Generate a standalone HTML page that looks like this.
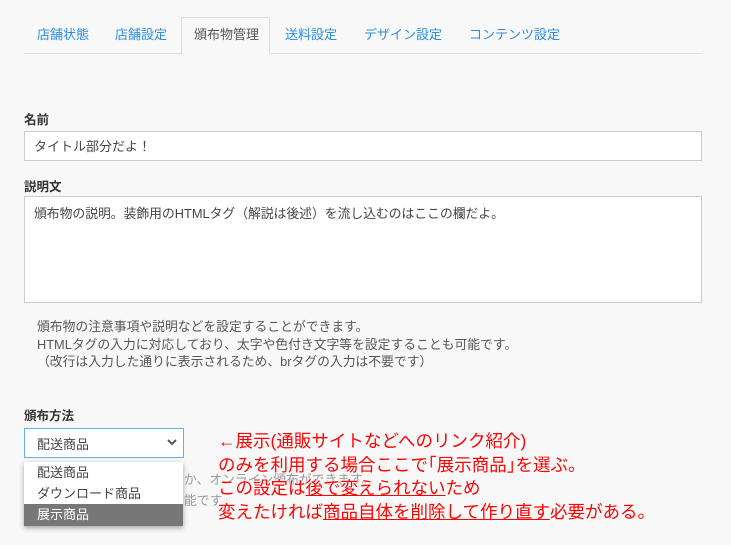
<!DOCTYPE html>
<html><head><meta charset="utf-8"><style>
body{margin:0;background:#f8f8f8;font-family:"Liberation Sans","Noto Sans CJK JP",sans-serif;color:#333;width:731px;height:545px;overflow:hidden;position:relative}
.a{position:absolute;white-space:nowrap}
.tab{position:absolute;top:17px;height:36px;line-height:36px;font-size:13px;color:#2a8ee6}
.lbl{font-size:12.5px;font-weight:bold;color:#333}
.box{position:absolute;background:#fff;border:1px solid #ccc;box-sizing:border-box}
.red{color:#f00;font-size:17.5px;text-shadow:0 0 2px #fff,0 0 2px #fff}
</style></head><body>
<div class="a" style="left:24px;top:53px;width:677px;border-top:1px solid #ddd"></div>
<div class="tab" style="left:37px">店舗状態</div>
<div class="tab" style="left:115px">店舗設定</div>
<div class="a" style="left:181px;top:17px;width:89px;height:37px;border:1px solid #ddd;border-bottom:none;background:#f8f8f8;box-sizing:border-box"></div>
<div class="tab" style="left:194px;color:#555">頒布物管理</div>
<div class="tab" style="left:285px">送料設定</div>
<div class="tab" style="left:364px">デザイン設定</div>
<div class="tab" style="left:469px">コンテンツ設定</div>

<div class="a lbl" style="left:24px;top:109px">名前</div>
<div class="box" style="left:24px;top:131px;width:678px;height:30px"></div>
<div class="a" style="left:34px;top:136px;font-size:13px;color:#444">タイトル部分だよ！</div>
<div class="a lbl" style="left:24px;top:176px">説明文</div>
<div class="box" style="left:24px;top:196px;width:678px;height:107px"></div>
<div class="a" style="left:34px;top:203px;font-size:12.8px;color:#444">頒布物の説明。装飾用のHTMLタグ（解説は後述）を流し込むのはここの欄だよ。</div>
<div class="a" style="left:37px;top:318px;font-size:12.8px;color:#555;line-height:17.5px">頒布物の注意事項や説明などを設定することができます。<br>HTMLタグの入力に対応しており、太字や色付き文字等を設定することも可能です。<br>（改行は入力した通りに表示されるため、brタグの入力は不要です）</div>

<div class="a lbl" style="left:24px;top:405px">頒布方法</div>
<div class="box" style="left:24px;top:428px;width:160px;height:30px;border-color:#66afe9"></div>
<div class="a" style="left:37px;top:434px;font-size:13px;color:#444">配送商品</div>
<svg class="a" style="left:167px;top:438px" width="10" height="8"><path d="M1 2 L5 6 L9 2" stroke="#555" stroke-width="2" fill="none"/></svg>
<div class="a" style="left:184px;top:470px;font-size:12.8px;color:#999;line-height:20px">か、オンライン頒布ができます。<br></div>
<div class="a" style="left:184px;top:490px;font-size:12.8px;color:#999">能です</div>
<div class="a" style="left:24px;top:462px;width:159px;height:64px;background:#fff;box-shadow:0 2px 5px rgba(0,0,0,.35);font-size:13px;color:#444">
<div style="height:21px;line-height:21px;padding-left:13px">配送商品</div>
<div style="height:21px;line-height:21px;padding-left:13px">ダウンロード商品</div>
<div style="height:22px;line-height:22px;padding-left:13px;background:#777;color:#fff">展示商品</div>
</div>

<div class="a red" style="left:218px;top:430px;line-height:23.5px">←展示(通販サイトなどへのリンク紹介)<br>のみを利用する場合ここで｢展示商品｣を選ぶ。<br>この設定は<u>後で変えられない</u>ため<br>変えたければ<u>商品自体を削除して作り直す</u>必要がある。</div>
</body></html>
